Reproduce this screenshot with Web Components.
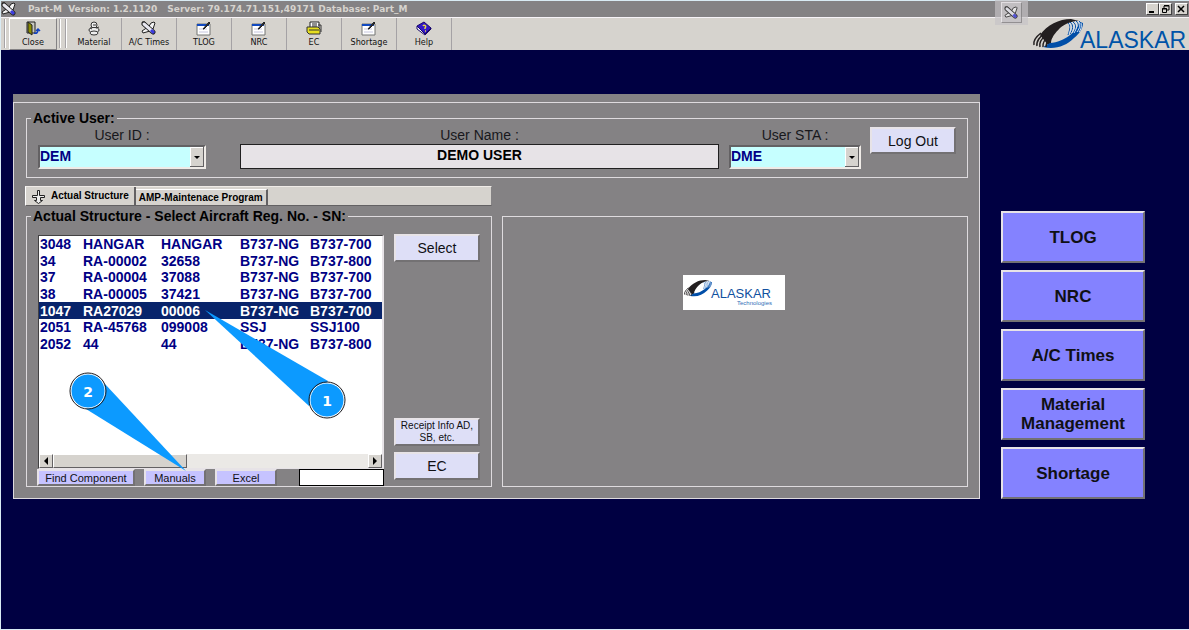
<!DOCTYPE html>
<html lang="en">
<head>
<meta charset="utf-8">
<title>Part-M</title>
<style>
html, body { margin: 0; min-height: 100%; }
body {
  --face: #d6d3ce; --gray: #848284; --navy: #000042; --ink: #000084;
  --lilac: #dedff7; --line: #dedbde;
  font: 14px/16px "Liberation Sans", Arial, sans-serif;
  background: #d9ebf4; min-height: 100vh; display: flex; box-sizing: border-box; padding: 1px 0 1px 1px;
}
part-app { flex: 1; }
</style>
</head>
<body>
<part-app></part-app>

<script>
const ICONS = {
  plane: '<path d="M7 7l3-5 3-1 1 1-2 6zM7 6l-6 4 1 2 7-2zM1 1h3l2 3-3 1z" fill="#f4f4f4" stroke="#222"/><path d="M3 3l9 8" stroke="#222" stroke-width="5" stroke-linecap="round"/><path d="M3 3l8 7" stroke="#e8e8f0" stroke-width="3" stroke-linecap="round"/><path d="M10 9l3 3" stroke="#3c3ce0" stroke-width="3"/>',
  door: '<path d="M2 1h8v11H2z" fill="#c8c8c0" stroke="#222"/><path d="M3 1l4 3v10l-4-3z" fill="#8c8c00" stroke="#222"/><path d="M9 12c3 1 4-1 4-3M11 10l2-2 2 2" stroke="#1040c0" stroke-width="1.5" fill="none"/>',
  material: '<g fill="#eee" stroke="#333"><circle cx="8" cy="4" r="3"/><ellipse cx="8" cy="9" rx="5" ry="2.5"/><ellipse cx="8" cy="12" rx="4" ry="2"/></g><path d="M7 4h3M4 7l2 1M10 7l3-1" stroke="#333"/>',
  form: '<path d="M1 3h13v11H1z" fill="#fff" stroke="#737573"/><path d="M1 3h12v2H1z" fill="#1048c0"/><path d="M3 8h8M3 11h9" stroke="#c6c6de"/><path d="M7 8l6-7 1 1-6 6z" fill="#333" stroke="#222"/>',
  folder: '<path d="M4 6V1h9v7" fill="#fff" stroke="#222"/><path d="M6 3h5M6 5h5" stroke="#222"/><path d="M1 6h11l2 2v5H3l-2-2z" fill="#e6de20" stroke="#333"/><path d="M3 9h10M12 4h3v7" fill="none" stroke="#333"/>',
  book: '<path d="M1 5l7-4 7 6-6 6z" fill="#3418c8" stroke="#18086b"/><path d="M1 5v3l8 6 6-6V7l-6 6z" fill="#fff" stroke="#18086b"/><path d="M7 5c1-2 4 0 2 2l0 1M9 10h1" fill="none" stroke="#e8d848" stroke-width="1.5"/>',
  cross: '<path d="M6.500 1.500h2v5h5v2h-4v3h2l-4 3-4-3h2v-3h-4v-2h5z" fill="#eee" stroke="#222"/>'
};
const icon = (name, w = 16, h = 15) =>
  `<svg width="${w}" height="${h}" viewBox="0 0 16 15" aria-hidden="true">${ICONS[name]}</svg>`;

const define = (name, render) => customElements.define(name, class extends HTMLElement {
  connectedCallback() {
    if (this.shadowRoot) return;
    const t = document.createElement('template');
    t.innerHTML = render(this);
    this.attachShadow({ mode: 'open' }).append(t.content.cloneNode(true));
  }
});

/* Company logo: striped ring and word mark; "small" adds the tag line. */
define('brand-logo', el => {
  const small = el.hasAttribute('small');
  const mark = `
    <path d="M7 16C14 6 26 0 38 0l8 2C38 2 32 5 27 9c-5 5-9 10-9 15l-3 2z" fill="#231f20"/>
    <path d="M10 28C22 31 33 27 41 19c6-5 9-10 9-15l-3-1C44 12 32 23 17 24z" fill="#004ea8"/>
    <g fill="none" stroke-width="1.5" stroke="#231f20"><path d="M1 26C0 22 4 17 8 14M4 27C3 23 7 17 11 15M7 28c-1-4 2-9 7-13M10 28c-1-4 3-9 7-13M13 28c0-4 2-7 6-10"/></g>
    <g fill="none" stroke="#004ea8" stroke-width="1"><path d="M35 4c3 2 2 6 0 12M37 3c4 3 3 8 0 12M40 3c4 3 3 7 0 11M43 2c4 3 2 8 0 12M46 2c3 3 2 7 0 11"/></g>
    <g fill="none" stroke="#d6e4f6" stroke-width="1"><path d="M36 4c3 3 2 7 0 11M39 3c3 3 2 7 0 11M42 2c3 3 2 7-1 12M45 2c3 3 2 7-1 11M48 4c1 3 0 7-2 9"/></g>`;
  return `<style>:host{display:block;flex:none}svg{display:block;overflow:visible}</style>` + (small
    ? `<svg width="102" height="35" viewBox="0 0 102 35" role="img" aria-label="Alaskar Technologies">
        <path d="M0 0h102v35H0z" fill="#fff"/><g transform="translate(1 5) scale(.56)">${mark}</g>
        <text x="28" y="23" font-size="13" fill="#1050a0">ALASKAR</text>
        <text x="54" y="30" font-size="6" fill="#3070b8">Technologies</text></svg>`
    : `<svg width="156" height="30" viewBox="0 0 156 30" role="img" aria-label="Alaskar">${mark}
        <text x="47" y="29" font-size="23" fill="#0054a8">ALASKAR</text></svg>`);
});

define('title-bar', () => `<style>
  :host{display:flex;align-items:center;height:16px;background:var(--gray);color:var(--face);
    font:bold 9px/16px "DejaVu Sans","Noto Sans",sans-serif;position:relative;white-space:pre}
  .name{margin-left:11px}.server{margin-left:10px}.gap{flex:1}
  .win{display:flex}
  button{width:13px;height:12px;padding:0;background:var(--face);border:1px solid;border-color:#fff #424142 #424142 #fff;display:grid;place-items:center}
  .x{margin:0 1px 0 3px}
  .chip{position:absolute;right:161px;top:-1px;width:33px;height:25px;background:#c6c3c6aa;display:grid;place-items:center}
  .chip span{display:grid;place-items:center;width:19px;height:19px;background:#c6c3c6;border:1px solid;border-color:#efebef #848284 #848284 #efebef;opacity:.8}
  </style>
  ${icon('plane')}<span class="name">Part-M  Version: 1.2.1120</span><span class="server">Server: 79.174.71.151,49171 Database: Part_M</span><span class="gap"></span>
  <span class="chip"><span>${icon('plane', 15, 14)}</span></span>
  <div class="win">
    <button aria-label="Minimize"><svg width="9" height="8"><path d="M1 6h5v2H1z"/></svg></button>
    <button aria-label="Restore"><svg width="9" height="8"><path d="M3 .5h5V5H6M3 1v2M1.500 3.500h4v4h-4zM3 1h5M1 4h5" fill="none" stroke="#000"/></svg></button>
    <button class="x" aria-label="Close"><svg width="9" height="8"><path d="M1 1l6 6M7 1L1 7" stroke="#000" stroke-width="1.500"/></svg></button>
  </div>`);

define('tool-button', el => `<style>
  :host{display:block;width:55px}
  button{width:100%;height:32px;padding:3px 0 0;border:0;border-right:1px solid #a5a2a5;background:none;color:#111;
    font:9px/12px "DejaVu Sans Condensed","DejaVu Sans",sans-serif;display:flex;flex-direction:column;align-items:center;white-space:nowrap}
  :host([raised]){width:48px}
  :host([raised]) button{border:1px solid;border-color:#fff #848284 #848284 #fff;padding-top:2px}
  svg{display:block;flex:none}
  </style><button>${icon(el.getAttribute('icon'))}<slot></slot></button>`);

define('tool-bar', () => `<style>
  :host{display:flex;height:33px;background:var(--face);border-top:1px solid #f7f3f7;box-sizing:border-box;padding:0 0 0 3px}
  .grip{width:1px;height:29px;margin-top:1px;background:#a5a2a5;border-right:1px solid #fff}
  .first{margin-right:3px}.second{margin:1px 4px 0 2px}
  .gap{flex:1}
  brand-logo{margin-top:1px}
  </style>
  <i class="grip first"></i><tool-button raised icon="door">Close</tool-button><i class="grip second"></i><i class="grip"></i>
  <tool-button icon="material">Material</tool-button><tool-button icon="plane">A/C Times</tool-button>
  <tool-button icon="form">TLOG</tool-button><tool-button icon="form">NRC</tool-button>
  <tool-button icon="folder">EC</tool-button><tool-button icon="form">Shortage</tool-button>
  <tool-button icon="book">Help</tool-button><span class="gap"></span><brand-logo></brand-logo>`);

define('push-button', () => `<style>
  :host{display:block}
  button{width:100%;height:100%;padding:0;font:inherit;color:#101014;background:var(--button,var(--lilac));
    border:solid;border-width:2px;border-color:#e7e3e7 #737173 #737173 #e7e3e7;overflow:hidden}
  </style><button><slot></slot></button>`);

define('combo-box', el => `<style>
  :host{display:flex;flex-direction:column;align-items:center;gap:2px;color:#18181c}
  .box{position:relative;width:100%;box-sizing:border-box;height:24px;border:2px solid;border-color:#636163 #efebe7 #efebe7 #636163}
  select{display:block;appearance:none;width:100%;height:20px;border:0;padding:0 0 2px 0;margin:0;background:#c6ffff;color:var(--ink);font:bold 14px/18px "Liberation Sans",Arial,sans-serif}
  svg{position:absolute;right:0;top:0;pointer-events:none}
  </style><label for="s">${el.getAttribute('label')}</label>
  <div class="box"><select id="s"><option>${el.getAttribute('value')}</option></select>
  <svg width="14" height="20"><path d="M0 0h14v20H0z" fill="#636163"/><path d="M0 0h13v19H0z" fill="#fff"/><path d="M1 1h12v18H1z" fill="#d6d3ce"/><path d="M4 9h6l-3 3z"/></svg></div>`);

define('group-box', () => `<style>
  :host{display:block}
  fieldset{box-sizing:border-box;width:100%;height:100%;margin:0;padding:1px;border:1px solid var(--line);min-width:0}
  legend{margin-left:3px;padding:0 2px;font-weight:bold;color:#000}
  </style><fieldset><legend><slot name="legend"></slot></legend><slot></slot></fieldset>`);

define('user-panel', () => `<style>
  :host{display:block}
  group-box{height:68px}
  .row{display:flex;align-items:flex-start}
  .id{width:168px;margin-left:10px}
  .name{flex:1;margin:0 10px 0 34px;display:flex;flex-direction:column;align-items:center;gap:1px;color:#18181c}
  input{width:100%;box-sizing:border-box;height:25px;padding:0 0 4px;border:1px solid #212021;background:#e7e3e7;font:bold 14px/18px "Liberation Sans",Arial,sans-serif;text-align:center;color:#000}
  .sta{width:132px}
  push-button{width:86px;height:27px;margin:0 10px 0 9px}
  </style>
  <group-box><span slot="legend">Active User:</span>
  <div class="row"><combo-box class="id" label="User ID :" value="DEM"></combo-box>
  <div class="name"><label for="n">User Name :</label><input id="n" readonly value="DEMO USER"></div>
  <combo-box class="sta" label="User STA :" value="DME"></combo-box><push-button>Log Out</push-button></div></group-box>`);

define('tab-strip', () => `<style>
  :host{display:flex;align-items:flex-end;height:20px;box-sizing:border-box;background:var(--face);border:solid;border-width:1px;border-color:#efebe7 #848284 #636163 #fff;font:bold 10px/14px "Liberation Sans",Arial,sans-serif}
  button{height:16px;padding:0 3px;font:inherit;color:#000;background:none;border:0;border-top:1px solid #fff;border-right:2px solid #636163;display:flex;align-items:center}
  .on{height:18px;padding:0 5px;border-top:0}svg{margin-right:4px}
  </style><button class="on">${icon('cross')}Actual Structure</button><button>AMP-Maintenace Program</button>`);

define('aircraft-list', () => {
  const rows = [
    ['3048', 'HANGAR', 'HANGAR', 'B737-NG', 'B737-700'], ['34', 'RA-00002', '32658', 'B737-NG', 'B737-800'],
    ['37', 'RA-00004', '37088', 'B737-NG', 'B737-700'], ['38', 'RA-00005', '37421', 'B737-NG', 'B737-700'],
    ['1047', 'RA27029', '00006', 'B737-NG', 'B737-700'], ['2051', 'RA-45768', '099008', 'SSJ', 'SSJ100'],
    ['2052', '44', '44', 'B737-NG', 'B737-800']];
  return `<style>
  :host{display:flex;flex-direction:column;box-sizing:border-box;background:#fff;border:1px solid;border-color:#424142 #e7e3e7 #e7e3e7 #424142;border-right-width:2px}
  table{width:100%;height:116px;table-layout:fixed;border-collapse:collapse;font-weight:bold;line-height:16px;color:var(--ink)}
  td{padding:0 0 0 1px;white-space:nowrap}
  .c0{width:43px}.c1{width:78px}.c2{width:79px}.c3{width:70px}
  .sel{background:#08246b;color:#fff}
  .gap{flex:1}
  .bar{display:flex;height:14px;background:#ebe9e6}
  .thumb{width:134px;margin-right:auto}
  .bar button,.thumb{box-sizing:border-box;background:var(--face);border:1px solid;border-color:#fff #636163 #636163 #fff;padding:0}
  .bar button{width:14px;display:grid;place-items:center}
  </style><table><colgroup><col class="c0"><col class="c1"><col class="c2"><col class="c3"><col></colgroup>
  ${rows.map((r, i) => `<tr${i === 4 ? ' class="sel"' : ''}>${r.map(c => `<td>${c}</td>`).join('')}</tr>`).join('')}</table>
  <div class="gap"></div>
  <div class="bar"><button aria-label="Scroll left"><svg width="8" height="8"><path d="M6 0v8L2 4z"/></svg></button><div class="thumb"></div>
  <button aria-label="Scroll right"><svg width="8" height="8"><path d="M2 0v8l4-4z"/></svg></button></div>`;
});

/* Numbered pointers laid over the list. */
define('step-callouts', () => `<style>:host{display:block;position:absolute;left:0;top:0;pointer-events:none}svg{display:block}
  text{font:bold 14px "DejaVu Sans",sans-serif;fill:#fff;text-anchor:middle}</style>
  <svg width="346" height="271" viewBox="26 208 346 271">
  <g fill="#0c9aff"><path d="M205 310L328 381 309 406z"/><path d="M186 471L105 384 86 409z"/></g>
  <g fill="#0c9aff" stroke="#fff"><circle cx="327" cy="400" r="17"/><circle cx="88" cy="391" r="17"/></g>
  <g fill="none" stroke="#18181c"><circle cx="327" cy="400" r="18"/><circle cx="88" cy="391" r="18"/></g>
  <text x="327" y="406">1</text><text x="88" y="397">2</text></svg>`);

define('structure-panel', () => `<style>
  :host{display:block;position:relative}
  group-box{height:279px}
  .cols{display:flex;gap:10px;padding:10px 0 0 9px;height:251px}
  .left{width:347px;display:flex;flex-direction:column}
  aircraft-list{height:234px;margin-left:1px}
  .actions{display:flex;font-size:11px;line-height:12px;--button:#c6c3ff}
  .actions push-button{height:17px;margin-right:9px}
  .find{width:98px}.short{width:62px}
  input{margin-left:auto;width:85px;height:17px;box-sizing:border-box;border:1px solid #000;background:#fff;padding:0 2px;font:11px "Liberation Sans",Arial,sans-serif}
  .side{width:86px;display:flex;flex-direction:column;gap:6px;height:246px;margin-top:-1px}
  .side push-button{height:28px}.side .info{margin-top:auto;font-size:10px;line-height:12px}
  </style><group-box><span slot="legend">Actual Structure - Select Aircraft Reg. No. - SN:</span>
  <div class="cols"><div class="left"><aircraft-list></aircraft-list>
  <div class="actions"><push-button class="find">Find Component</push-button><push-button class="short">Manuals</push-button><push-button class="short">Excel</push-button><input aria-label="Search"></div></div>
  <div class="side"><push-button>Select</push-button><push-button class="info">Receipt Info AD, SB, etc.</push-button><push-button>EC</push-button></div></div></group-box>
  <step-callouts></step-callouts>`);

define('main-panel', () => `<style>
  :host{display:block;background:var(--gray)}
  .head{height:8px}
  .body{border:1px solid var(--line);padding:7px 11px 11px 12px}
  .work{display:grid;grid-template-columns:466px 1fr;column-gap:10px;margin-top:8px}
  tab-strip{grid-column:1;margin-left:-1px}structure-panel{grid-column:1;margin-top:2px}
  .view{grid-column:2;grid-row:2;margin-top:10px;border:1px solid var(--line);padding:0 2px 0 0;display:flex;justify-content:center;align-items:flex-start}
  .view brand-logo{margin-top:58px}
  </style><div class="head"></div><div class="body"><user-panel></user-panel>
  <div class="work"><tab-strip></tab-strip><structure-panel></structure-panel><div class="view"><brand-logo small></brand-logo></div></div></div>`);

define('side-nav', () => `<style>
  :host{display:flex;flex-direction:column;gap:7px;font:bold 17px/19px "Liberation Sans",Arial,sans-serif;--button:#8482ff}
  push-button{height:52px}
  </style><push-button>TLOG</push-button><push-button>NRC</push-button><push-button>A/C Times</push-button><push-button>Material Management</push-button><push-button>Shortage</push-button>`);

define('part-app', () => `<style>
  :host{display:block;background:var(--navy)}
  main{display:flex;gap:21px;padding:44px 44px 20px 12px;align-items:flex-start}
  main-panel{flex:1;min-width:0}side-nav{width:144px;margin-top:117px}
  </style><title-bar></title-bar><tool-bar></tool-bar><main><main-panel></main-panel><side-nav></side-nav></main>`);
</script>
</body>
</html>
